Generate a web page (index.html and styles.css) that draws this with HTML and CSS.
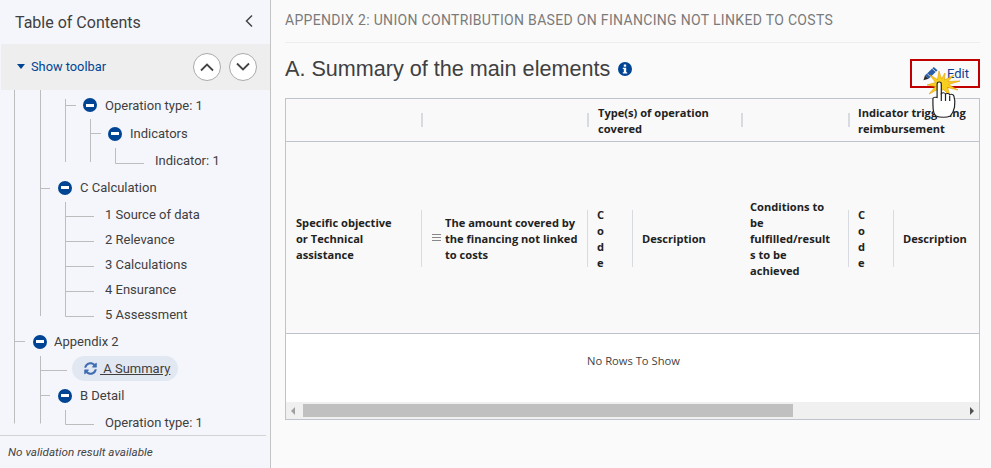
FILE: index.html
```html
<!DOCTYPE html>
<html lang="en">
<head>
  <meta charset="UTF-8" />
  <title>Appendix 2 - A Summary</title>
  <link rel="stylesheet" href="styles.css">
</head>
<body>
<div class="page">

  <!-- table of contents -->
  <aside class="sidebar">
    <div class="toc-head">
      <span class="toc-title">Table of Contents</span>
      <svg class="toc-collapse" width="10" height="14" viewBox="0 0 10 14"><path d="M8 1.500 2.500 7 8 12.500" fill="none" stroke="#444" stroke-width="1.500"/></svg>
    </div>
    <div class="toolbar">
      <span class="toolbar-toggle"><span class="caret"></span>Show toolbar</span>
      <span class="toolbar-btns">
        <span class="round-btn"><svg width="16" height="10" viewBox="0 0 16 10"><path d="M2 8.500 8 2.500l6 6" fill="none" stroke="#444" stroke-width="1.800"/></svg></span>
        <span class="round-btn"><svg width="16" height="10" viewBox="0 0 16 10"><path d="M2 1.500 8 7.500l6-6" fill="none" stroke="#444" stroke-width="1.800"/></svg></span>
      </span>
    </div>
    <div class="tree">
      <!-- connector lines -->
      <svg class="tree-lines" width="270" height="345" viewBox="0 0 270 345" fill="none" stroke="#bdbdbd">
        <path d="M14.500 0V333.500M40.500 0V226M65.500 9V72M90.500 29V72M115.500 58V73.500H144M66 15.500H76M91 43.500H101"/>
        <path d="M41 98.500H50M65.500 112V226.500H94M66 126.500H94M66 151.500H94M66 176.500H94M66 201.500H94"/>
        <path d="M15 251.500H25M40.500 266V333.500M41 280.500H67M41 305.500H50M65.500 320V334.500H94"/>
      </svg>
      <div class="row lvl3 first"><span class="minus"></span>Operation type: 1</div>
      <div class="row lvl4"><span class="minus"></span>Indicators</div>
      <div class="row leaf lvl5">Indicator: 1</div>
      <div class="row lvl2 gap"><span class="minus"></span>C Calculation</div>
      <div class="row short leaf lvl4">1 Source of data</div>
      <div class="row short leaf lvl4">2 Relevance</div>
      <div class="row short leaf lvl4">3 Calculations</div>
      <div class="row short leaf lvl4">4 Ensurance</div>
      <div class="row short leaf lvl4 gap">5 Assessment</div>
      <div class="row lvl1"><span class="minus"></span>Appendix 2</div>
      <div class="row lvl-current">
        <span class="current">
          <svg class="sync" width="13" height="13" viewBox="0 0 512 512"><path fill="#3f6db3" d="M370.700 133.300C339.500 104 298.900 88 255.800 88c-77.500 0-144.400 53.100-162.900 126.900-1.300 5.400-6.100 9.100-11.600 9.100H24.100c-7.500 0-13.200-6.800-11.800-14.200C33.900 94.900 134.800 8 256 8c66.400 0 126.800 26.100 171.300 68.700L463 41c15.100-15.100 41-4.400 41 17v134c0 13.300-10.700 24-24 24H346c-21.400 0-32.100-25.900-17-41l41.700-41.700zM32 296h134c21.400 0 32.100 25.900 17 41l-41.700 41.700c31.200 29.300 71.800 45.300 114.900 45.300 77.400 0 144.300-53.100 162.900-126.800 1.300-5.400 6.100-9.100 11.600-9.100h57.300c7.500 0 13.200 6.800 11.800 14.200C478.100 417.100 377.200 504 256 504c-66.400 0-126.800-26.100-171.300-68.700L49 471c-15.100 15.100-41 4.400-41-17V320c0-13.300 10.700-24 24-24z"/></svg>
          <span class="current-text">&nbsp;A Summary</span>
        </span>
      </div>
      <div class="row lvl2"><span class="minus"></span>B Detail</div>
      <div class="row leaf lvl4">Operation type: 1</div>
    </div>
    <div class="validation">No validation result available</div>
  </aside>

  <main class="content">
    <div class="crumb">APPENDIX 2: UNION CONTRIBUTION BASED ON FINANCING NOT LINKED TO COSTS</div>

    <div class="title-bar">
      <h1 class="title">A. Summary of the main elements
        <svg class="info" width="14" height="14" viewBox="0 0 14 14"><circle cx="7" cy="7" r="7" fill="#004494"/><rect x="5.800" y="2.500" width="2.400" height="2.200" fill="#fff"/><path d="M4.800 5.800H8.200V10.200H9.200V11.500H4.800V10.200H5.800V7.100H4.800Z" fill="#fff"/></svg>
      </h1>
      <button class="edit-btn">
        <svg width="15" height="15" viewBox="0 0 16 15"><path d="M11.500 .5 15.500 4 6 13 2 9.500Z" fill="#2b5ea8"/><path d="M9.800 2.200 13.700 5.700M4.500 7.500 8 11" stroke="#dfe8f5" stroke-width=".9"/><path d="M2 9.500 6 13 .5 14.800Z" fill="#2b2b2b"/></svg>
        Edit
      </button>
    </div>

    <div class="grid">
      <div class="grid-head">
        <div class="group-row">
          <div class="group c1"></div>
          <div class="group c2 sep"></div>
          <div class="group c34 sep">Type(s) of operation covered</div>
          <div class="group c5 sep"></div>
          <div class="group c67 sep">Indicator triggering reimbursement</div>
        </div>
        <div class="col-row">
          <div class="col c1">Specific objective or Technical assistance</div>
          <div class="col c2 sep"><span class="lines-icon"></span><span>The amount covered by the financing not linked to costs</span></div>
          <div class="col c3 sep">Code</div>
          <div class="col c4 sep">Description</div>
          <div class="col c5">Conditions to be fulfilled/results to be achieved</div>
          <div class="col c3 sep">Code</div>
          <div class="col c4 sep">Description</div>
        </div>
      </div>
      <div class="grid-body">No Rows To Show</div>
      <div class="scrollbar">
        <span class="arrow left"></span>
        <span class="thumb"></span>
        <span class="arrow right"></span>
      </div>
    </div>
  </main>

  <!-- cursor and click burst from the screenshot -->
  <svg class="pointer" width="36" height="50" viewBox="0 0 36 50">
    <path d="M13 1 15.500 9 19 3 18.500 10 28 5 22 11.500 34 11 22.500 14.500 32 20 21.500 17.500 24 26 17 19 13 25 13.500 18.500 3 24 9.500 16.500 1 15 9.500 12.500 4 5 11.500 9.500Z" fill="#f7cf1f" stroke="#e39a00" stroke-width=".6"/>
    <g transform="translate(-1.500 0) scale(1.200 1)">
      <path d="M10.500 14c0-2.600 3.500-2.600 3.500 0v9.500c1.500-1 3-.8 3.500.4 1.200-.9 3-.6 3.500.7 1.500-.7 3.200 0 3.500 1.500 1 3.500 1 7.500.5 11-.5 3-1.500 6.400-3.500 8.900-3 1.800-8.500 1.800-12 0C7 43.500 7.500 41 7.200 38.500c-.2-3-.2-7.500-.2-9.500 0-1.500 1.700-2.300 3.500-1.500Z" fill="#fff" stroke="#222" stroke-width="1"/>
      <path d="M14 23.500V31M17.500 24V31M21 25.500V31" stroke="#222" stroke-width="1" fill="none"/>
    </g>
  </svg>
</div>
</body>
</html>
```

FILE: styles.css
```css
html, body {
  margin: 0;
  height: 100%;
}
body {
  font-family: Roboto, "Liberation Sans", sans-serif;
  color: #333;
  background-color: #fafafa;
  overflow: hidden;
}
.page {
  display: flex;
  height: 468px;
  position: relative;
}

/* sidebar */
.sidebar {
  width: 270px;
  flex: none;
  box-sizing: content-box;
  background-color: #f5f6fb;
  border-right: 1px solid #c4c4c4;
  display: flex;
  flex-direction: column;
}
.toc-head {
  height: 44px;
  display: flex;
  align-items: center;
  justify-content: space-between;
  padding: 0 16px 0 15px;
}
.toc-title {
  font-size: 16px;
  color: #404040;
}
.toc-collapse {
  margin-top: -3px;
}
.toolbar {
  height: 46px;
  margin-left: 1px;
  background-color: #eeeeee;
  display: flex;
  align-items: center;
  justify-content: space-between;
  padding: 0 13px 0 16px;
}
.toolbar-toggle {
  display: flex;
  align-items: center;
  font-size: 12.800px;
  color: #004494;
  margin-top: -1px;
}
.caret {
  border-left: 4.500px solid transparent;
  border-right: 4.500px solid transparent;
  border-top: 5px solid #004494;
  margin-right: 6px;
}
.toolbar-btns {
  display: flex;
  gap: 8px;
}
.round-btn {
  width: 26px;
  height: 26px;
  border: 1px solid #aaa;
  border-radius: 50%;
  background-color: #fff;
  display: flex;
  align-items: center;
  justify-content: center;
}

/* tree */
.tree {
  height: 345px;
  position: relative;
  font-size: 13px;
  color: #404040;
  overflow: hidden;
}
.tree-lines {
  position: absolute;
  left: 0;
  top: 0;
}
.row {
  height: 27px;
  display: flex;
  align-items: center;
  position: relative;
  white-space: nowrap;
}
.row.first {
  height: 30px;
}
.row.short {
  height: 25px;
}
.row.gap {
  margin-bottom: 1px;
}
.minus {
  width: 14px;
  height: 14px;
  border-radius: 50%;
  background-color: #004494;
  margin-right: 8px;
  position: relative;
  flex: none;
}
.minus::after {
  content: "";
  position: absolute;
  left: 3px;
  right: 3px;
  top: 5.500px;
  height: 3px;
  background-color: #fff;
}
.lvl1 { padding-left: 33px; }
.lvl1 .minus { margin-right: 7px; }
.lvl2 { padding-left: 58px; }
.lvl3 { padding-left: 83px; }
.lvl4 { padding-left: 108px; }
.leaf.lvl4 { padding-left: 105px; }
.leaf.lvl5 { padding-left: 155px; }
.lvl-current { padding-left: 72px; }
.current {
  height: 25px;
  width: 106px;
  box-sizing: border-box;
  background-color: #e1e8f2;
  border-radius: 13px;
  display: flex;
  align-items: center;
  padding-left: 12px;
}
.sync {
  margin-right: 3px;
}
.current-text {
  text-decoration: underline;
}
.validation {
  flex: 1;
  margin-right: 4px;
  border-top: 1px solid #d4d4d4;
  padding: 9px 0 0 8px;
  font-size: 11.700px;
  font-style: italic;
  color: #444;
}

/* main */
.content {
  flex: 1;
  min-width: 0;
  padding: 0 11px 0 14px;
}
.crumb {
  height: 43px;
  box-sizing: border-box;
  border-bottom: 1px solid #eeeeee;
  padding-top: 12px;
  font-size: 14px;
  letter-spacing: .32px;
  color: #7a7a7a;
  white-space: nowrap;
}
.title-bar {
  height: 55px;
  display: flex;
  justify-content: space-between;
  align-items: flex-start;
}
.title {
  margin: 13px 0 0 0;
  font-family: "Liberation Sans", Arial, sans-serif;
  font-size: 21.600px;
  font-weight: normal;
  color: #404040;
  white-space: nowrap;
}
.info {
  margin-left: 2px;
}
.edit-btn {
  margin-top: 16px;
  width: 70px;
  height: 29px;
  border: 2px solid #c00000;
  background: none;
  padding: 0 0 0 11px;
  display: flex;
  align-items: center;
  gap: 9px;
  font-family: Roboto, "Liberation Sans", sans-serif;
  font-size: 13px;
  color: #0d3f94;
}

/* table */
.grid {
  border: 1px solid #bdc3cf;
  height: 322px;
  box-sizing: border-box;
  display: flex;
  flex-direction: column;
  overflow: hidden;
  font-family: "Open Sans", "Noto Sans", sans-serif;
}
.grid-head {
  background-color: #f9f9f9;
  font-size: 11.100px;
  font-weight: 700;
  line-height: 16px;
  color: #222;
  border-bottom: 1px solid #bdc3cf;
}
.group-row, .col-row {
  display: grid;
  grid-template-columns: 135px 166px 45px 109px 107px 45px 90px;
  align-items: center;
}
.group-row {
  height: 42px;
  border-bottom: 1px solid #bdc3cf;
}
.col-row {
  height: 191px;
}
.group, .col {
  box-sizing: border-box;
  padding: 0 10px;
  position: relative;
  top: 1px;
}
.group.c34 { padding-left: 11px; }
.c34 { grid-column: span 2; }
.c67 { grid-column: span 2; white-space: nowrap; }
.group.c67 { white-space: normal; width: 135px; }
.group { height: 32px; }
.group.sep::before {
  content: "";
  position: absolute;
  left: 0;
  top: 8px;
  width: 2px;
  height: 14px;
  background-color: #d8dbe2;
}
.col.sep::before {
  content: "";
  position: absolute;
  left: 0;
  top: 50%;
  height: 57px;
  margin-top: -29px;
  width: 1px;
  background-color: #d8dbe2;
}
.col.c1 {
  padding-right: 24px;
}
.col.c2 {
  display: flex;
  align-items: center;
  gap: 4px;
  padding: 0 6px 0 11px;
}
.col.c3 {
  word-break: break-all;
  padding-right: 26px;
}
.col.c5 {
  word-break: break-word;
  padding: 0 13px 0 9px;
}
.lines-icon {
  width: 9px;
  height: 7px;
  flex: none;
  margin-bottom: 2px;
  border-top: 1px solid #888;
  border-bottom: 1px solid #888;
  position: relative;
  box-sizing: border-box;
}
.lines-icon::after {
  content: "";
  position: absolute;
  left: 0;
  right: 0;
  top: 2px;
  height: 1px;
  background-color: #888;
}
.grid-body {
  flex: 1;
  background-color: #fff;
  display: flex;
  align-items: center;
  justify-content: center;
  font-size: 11.200px;
  color: #444;
  padding: 0 0 16px 2px;
}
.scrollbar {
  height: 17px;
  background-color: #f0f0f0;
  display: flex;
  align-items: center;
  padding: 0 5px;
}
.thumb {
  width: 490px;
  height: 13px;
  background-color: #c0c0c0;
  margin-left: 8px;
}
.arrow {
  width: 0;
  height: 0;
  border-top: 4px solid transparent;
  border-bottom: 4px solid transparent;
}
.arrow.left {
  border-right: 4px solid #a0a0a0;
}
.arrow.right {
  border-left: 4px solid #505050;
  margin-left: auto;
}

/* cursor overlay */
.pointer {
  position: absolute;
  left: 926px;
  top: 70px;
}
```
